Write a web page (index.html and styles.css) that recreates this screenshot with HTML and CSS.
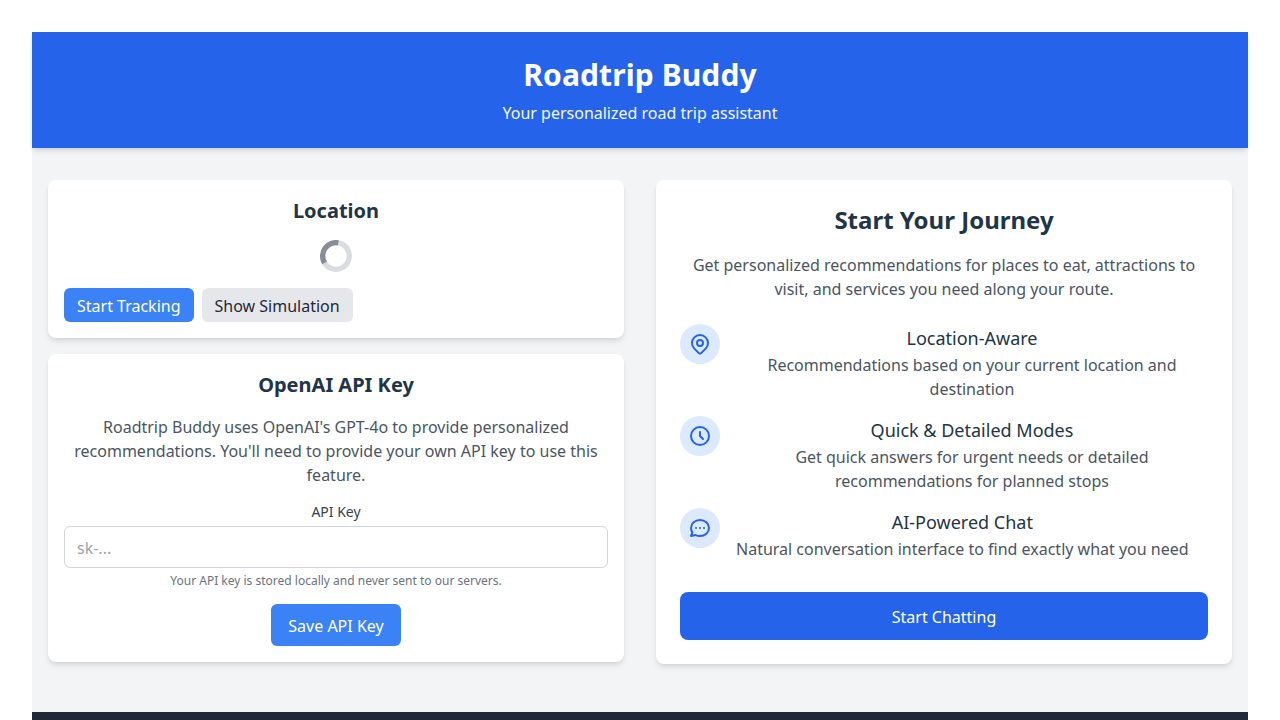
FILE: index.html
```html
<!DOCTYPE html>
<html lang="en">
<head>
<meta charset="UTF-8">
<title>Roadtrip Buddy</title>
<link rel="stylesheet" href="styles.css">
</head>
<body>
<div class="app">
  <header class="header">
    <h1>Roadtrip Buddy</h1>
    <p>Your personalized road trip assistant</p>
  </header>
  <main class="main">
    <div class="column">
      <section class="card">
        <h2 class="card-title">Location</h2>
        <svg class="spinner" viewBox="0 0 24 24" fill="none"><circle opacity=".25" cx="12" cy="12" r="10" stroke="currentColor" stroke-width="4"/><path opacity=".75" fill="currentColor" d="M4 12a8 8 0 018-8V0C5.373 0 0 5.373 0 12h4zm2 5.291A7.962 7.962 0 014 12H0c0 3.042 1.135 5.824 3 7.938l3-2.647z"/></svg>
        <div class="actions">
          <button class="btn btn-blue">Start Tracking</button>
          <button class="btn btn-gray">Show Simulation</button>
        </div>
      </section>
      <section class="card">
        <h2 class="card-title">OpenAI API Key</h2>
        <p class="key-text">Roadtrip Buddy uses OpenAI's GPT-4o to provide personalized recommendations. You'll need to provide your own API key to use this feature.</p>
        <label class="key-label" for="key">API Key</label>
        <input class="key-input" id="key" type="text" placeholder="sk-...">
        <p class="key-note">Your API key is stored locally and never sent to our servers.</p>
        <button class="btn btn-blue btn-save">Save API Key</button>
      </section>
    </div>
    <section class="card journey">
      <h2 class="journey-title">Start Your Journey</h2>
      <p class="journey-text">Get personalized recommendations for places to eat, attractions to visit, and services you need along your route.</p>
      <div class="features">
        <div class="feature">
          <div class="feature-icon"><svg viewBox="0 0 24 24"><path d="M17.657 16.657L13.414 20.9a1.998 1.998 0 01-2.827 0l-4.244-4.243a8 8 0 1111.314 0z"/><path d="M15 11a3 3 0 11-6 0 3 3 0 016 0z"/></svg></div>
          <div class="feature-body"><h3>Location-Aware</h3><p>Recommendations based on your current location and destination</p></div>
        </div>
        <div class="feature">
          <div class="feature-icon"><svg viewBox="0 0 24 24"><path d="M12 8v4l3 3m6-3a9 9 0 11-18 0 9 9 0 0118 0z"/></svg></div>
          <div class="feature-body"><h3>Quick &amp; Detailed Modes</h3><p>Get quick answers for urgent needs or detailed recommendations for planned stops</p></div>
        </div>
        <div class="feature">
          <div class="feature-icon"><svg viewBox="0 0 24 24"><path d="M8 12h.01M12 12h.01M16 12h.01M21 12c0 4.418-4.03 8-9 8a9.863 9.863 0 01-4.255-.949L3 20l1.395-3.72C3.512 15.042 3 13.574 3 12c0-4.418 4.03-8 9-8s9 3.582 9 8z"/></svg></div>
          <div class="feature-body"><h3>AI-Powered Chat</h3><p>Natural conversation interface to find exactly what you need</p></div>
        </div>
      </div>
      <button class="btn-chat">Start Chatting</button>
    </section>
  </main>
  <footer class="footer"></footer>
</div>
</body>
</html>
```

FILE: styles.css
```css
*, *::before, *::after { box-sizing: border-box; }
html { overflow: hidden; }
body, h1, h2, h3, p { margin: 0; }
body {
  height: 720px;
  overflow: hidden;
  padding: 32px 32px 0;
  background: #fff;
  color: #213547;
  font: 16px/24px "Noto Sans", sans-serif;
  text-align: center;
  text-rendering: optimizeLegibility;
  -webkit-font-smoothing: antialiased;
}
button, input { font: inherit; text-rendering: inherit; }
.app { display: flex; flex-direction: column; background: #f3f4f6; }
.header {
  height: 116px;
  padding: 25px 24px 23px;
  background: #2563eb;
  color: #fff;
  box-shadow: 0 4px 6px -1px rgba(0,0,0,.1), 0 2px 4px -2px rgba(0,0,0,.1);
}
.header h1 { font-size: 30px; line-height: 36px; font-weight: 700; letter-spacing: .1px; }
.header p { margin-top: 8px; opacity: .95; }
.main {
  display: grid;
  grid-template-columns: 1fr 1fr;
  align-items: start;
  gap: 32px;
  height: 564px;
  padding: 32px 16px;
}
.column { display: flex; flex-direction: column; gap: 16px; }
.card {
  padding: 16px;
  background: #fff;
  border-radius: 8px;
  box-shadow: 0 4px 6px -1px rgba(0,0,0,.1), 0 2px 4px -2px rgba(0,0,0,.1);
}
.card-title { font-size: 20px; line-height: 30px; font-weight: 700; margin-bottom: 14px; }
.spinner {
  display: block;
  width: 32px;
  height: 32px;
  margin: 0 auto 16px;
  color: #6b7280;
  transform: rotate(10deg);
}
.actions { display: flex; gap: 8px; }
.btn { border: 1px solid transparent; border-radius: 6px; padding: 5px 12px 3px; }
.btn-blue { background: #3b82f6; color: #fff; }
.btn-gray { background: #e5e7eb; color: #1f2937; }
.key-text { padding-top: 1px; color: #4b5563; margin-bottom: 15px; }
.key-label { display: block; margin-bottom: 4px; font-size: 14px; line-height: 20px; color: #374151; }
.key-input {
  display: block;
  width: 100%;
  height: 42px;
  padding: 9px 12px 7px;
  border: 1px solid #d1d5db;
  border-radius: 6px;
}
.key-input::placeholder { color: #9ca3af; opacity: 1; }
.key-note { margin: 5px 0 15px; font-size: 12px; line-height: 16px; color: #6b7280; }
.btn-save { padding: 9px 16px 7px; }
.journey { padding: 24px; }
.journey-title { margin-bottom: 17px; font-size: 24px; line-height: 32px; font-weight: 700; }
.journey-text { margin-bottom: 23px; color: #4b5563; }
.features { display: flex; flex-direction: column; gap: 15px; margin-bottom: 31px; }
.feature { display: flex; align-items: flex-start; }
.feature-icon {
  flex: none;
  display: flex;
  width: 40px;
  height: 40px;
  padding: 8px;
  margin-right: 16px;
  border-radius: 50%;
  background: #dbeafe;
}
.feature-icon svg {
  width: 24px;
  height: 24px;
  fill: none;
  stroke: #2563eb;
  stroke-width: 2;
  stroke-linecap: round;
  stroke-linejoin: round;
}
.feature-body h3 { font-size: 18px; line-height: 28px; font-weight: 400; }
.feature-body p { margin-top: 1px; color: #4b5563; }
.btn-chat {
  display: block;
  width: 100%;
  height: 48px;
  padding: 2px 0 0;
  border: 0;
  border-radius: 8px;
  background: #2563eb;
  color: #fff;
}
.footer { height: 8px; background: #1f2937; }
```
